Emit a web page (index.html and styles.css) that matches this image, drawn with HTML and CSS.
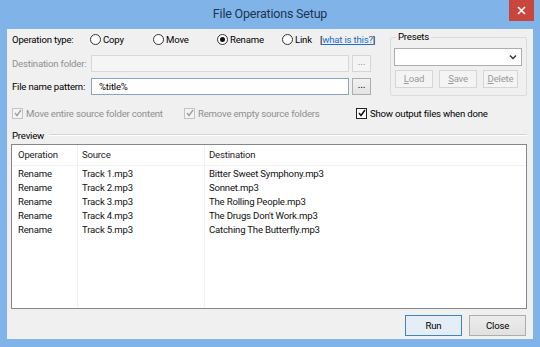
FILE: index.html
```html
<!DOCTYPE html>
<html>
<head>
<meta charset="utf-8">
<link rel="stylesheet" href="styles.css">
</head>
<body>
<div class="window">
  <div class="titlebar">
    <span></span>
    <div class="title">File Operations Setup</div>
    <div class="close"><svg width="9" height="9" viewBox="0 0 9 9"><path d="M1 1L8 8M8 1L1 8" stroke="#fff" stroke-width="1.6"/></svg></div>
  </div>
  <div class="client">
    <div class="top">
      <div class="left">
        <div class="row row1">
          <span class="label">Operation type:</span>
          <label class="radio w63"><span class="rbox"></span>Copy</label>
          <label class="radio w64"><span class="rbox"></span>Move</label>
          <label class="radio w65"><span class="rbox on"></span>Rename</label>
          <label class="radio"><span class="rbox"></span>Link</label>
          <span class="help">[<span class="link">what is this?</span>]</span>
        </div>
        <div class="row row2">
          <span class="label dis">Destination folder:</span>
          <div class="input disabled"></div>
          <div class="dots disabled">...</div>
        </div>
        <div class="row row3">
          <span class="label">File name pattern:</span>
          <div class="input">%title%</div>
          <div class="dots">...</div>
        </div>
      </div>
      <div class="group">
        <div class="legend">Presets</div>
        <div class="combo"><svg width="8" height="6" viewBox="0 0 8 6"><path d="M1 1.5L4 4.5L7 1.5" fill="none" stroke="#333" stroke-width="1.4"/></svg></div>
        <div class="gbtns">
          <div class="btn dis b38"><u>L</u>oad</div>
          <div class="btn dis b38"><u>S</u>ave</div>
          <div class="btn dis b36"><u>D</u>elete</div>
        </div>
      </div>
    </div>
    <div class="checks">
      <label class="check dis"><span class="cbox"><svg width="8" height="8" viewBox="0 0 8 8"><path d="M1 4L3 6.5L7 1" fill="none" stroke="#a0a0a0" stroke-width="1.4"/></svg></span>Move entire source folder content</label>
      <label class="check dis"><span class="cbox"><svg width="8" height="8" viewBox="0 0 8 8"><path d="M1 4L3 6.5L7 1" fill="none" stroke="#a0a0a0" stroke-width="1.4"/></svg></span>Remove empty source folders</label>
      <label class="check"><span class="cbox on"><svg width="8" height="8" viewBox="0 0 8 8"><path d="M1 4L3 6.5L7 1" fill="none" stroke="#111" stroke-width="1.5"/></svg></span>Show output files when done</label>
    </div>
    <div class="phead"><span>Preview</span><div class="rule"></div></div>
    <div class="list">
      <div class="col c1">
        <div class="hcell">Operation</div>
        <div class="cell">Rename</div>
        <div class="cell">Rename</div>
        <div class="cell">Rename</div>
        <div class="cell">Rename</div>
        <div class="cell">Rename</div>
      </div>
      <div class="col c2">
        <div class="hcell">Source</div>
        <div class="cell">Track 1.mp3</div>
        <div class="cell">Track 2.mp3</div>
        <div class="cell">Track 3.mp3</div>
        <div class="cell">Track 4.mp3</div>
        <div class="cell">Track 5.mp3</div>
      </div>
      <div class="col c3">
        <div class="hcell">Destination</div>
        <div class="cell">Bitter Sweet Symphony.mp3</div>
        <div class="cell">Sonnet.mp3</div>
        <div class="cell">The Rolling People.mp3</div>
        <div class="cell">The Drugs Don't Work.mp3</div>
        <div class="cell">Catching The Butterfly.mp3</div>
      </div>
    </div>
    <div class="footer">
      <div class="pbtn default">Run</div>
      <div class="pbtn">Close</div>
    </div>
  </div>
</div>
</body>
</html>
```

FILE: styles.css
```css
html, body { margin: 0; padding: 0; }
body {
  font-family: Roboto, "Liberation Sans", sans-serif;
  font-size: 9.6px;
  letter-spacing: -0.2px;
  color: #000;
  white-space: nowrap;
}
.window {
  width: 540px;
  height: 347px;
  background: #80b4e9;
  display: flex;
  flex-direction: column;
}
.titlebar {
  height: 29px;
  display: grid;
  grid-template-columns: 1fr auto 1fr;
  align-items: start;
}
.title {
  font-size: 12.5px;
  letter-spacing: -0.2px;
  line-height: 27px;
  color: #1c3553;
}
.close {
  justify-self: end;
  margin-right: 6px;
  width: 25px;
  height: 21px;
  background: #c9463d;
  display: flex;
  align-items: center;
  justify-content: center;
}
.client {
  flex: 1;
  margin: 0 7px 8px 7px;
  background: #f0f0f0;
  padding: 2px 6px 0 5px;
  display: flex;
  flex-direction: column;
}
.top {
  display: flex;
  justify-content: space-between;
}
.left { width: 360px; }
.row {
  display: flex;
  align-items: center;
}
.row1 { height: 16px; }
.row2 { height: 17px; margin-top: 8px; }
.row3 { height: 17px; margin-top: 6px; }
.label { width: 78px; flex: none; }
.label.dis { color: #8f8f8f; }
.radio {
  display: flex;
  align-items: center;
  gap: 2px;
  flex: none;
}
.w63 { width: 63px; }
.w64 { width: 64px; }
.w65 { width: 65px; }
.rbox {
  width: 9px;
  height: 9px;
  border: 1px solid #333;
  border-radius: 50%;
  background: #fff;
  display: flex;
  align-items: center;
  justify-content: center;
}
.rbox.on::after {
  content: "";
  width: 5px;
  height: 5px;
  border-radius: 50%;
  background: #111;
}
.help { margin-left: 8px; }
.link { color: #1a6fc9; text-decoration: underline; }
.input {
  margin-left: 1px;
  height: 15px;
  border: 1px solid #a9acb3;
  background: #fff;
  padding-left: 7px;
  line-height: 15px;
  width: 249px;
}
.input.disabled {
  background: #f5f5f5;
  border-color: #d9d9d9;
}
.row3 .input { border-color: #8aa3c0; }
.dots {
  margin-left: 3px;
  width: 17px;
  height: 15px;
  border: 1px solid #adadad;
  background: linear-gradient(#f2f2f2, #e3e3e3);
  text-align: center;
  line-height: 12px;
  font-size: 10px;
}
.dots.disabled {
  border-color: #d5d5d5;
  background: #f4f4f4;
  color: #999;
}
.group {
  width: 128px;
  margin-top: 6px;
  height: 57px;
  border: 1px solid #dcdcdc;
  border-radius: 2px;
  padding: 0 4px 0 3px;
}
.legend {
  margin-top: -7px;
  margin-left: 2px;
  padding: 0 2px;
  height: 12px;
  line-height: 12px;
  background: #f0f0f0;
  width: max-content;
}
.combo {
  margin-top: 5px;
  height: 16px;
  border: 1px solid #abadb3;
  background: #fff;
  display: flex;
  align-items: center;
  justify-content: flex-end;
  padding-right: 4px;
}
.gbtns {
  margin-top: 4px;
  display: flex;
  gap: 6px;
  padding-left: 1px;
}
.btn {
  height: 16px;
  border: 1px solid #d5d5d5;
  background: #f4f4f4;
  color: #9a9a9a;
  text-align: center;
  line-height: 16px;
}
.b38 { width: 36px; }
.b36 { width: 33px; }
.checks {
  margin-top: 9px;
  height: 16px;
  display: flex;
  align-items: center;
}
.check {
  width: 172px;
  display: flex;
  align-items: center;
  gap: 3px;
  flex: none;
}
.check.dis { color: #8f8f8f; }
.cbox {
  width: 9px;
  height: 9px;
  border: 1px solid #c3c3c3;
  background: #f4f4f4;
  display: flex;
  align-items: center;
  justify-content: center;
}
.cbox.on { border-color: #222; background: #fff; }
.phead {
  margin-top: 8px;
  height: 12px;
  display: flex;
  align-items: center;
  gap: 5px;
}
.rule {
  flex: 1;
  height: 0;
  border-top: 1px solid #d5d5d5;
  border-bottom: 1px solid #fff;
  margin-top: -1px;
}
.list {
  margin-top: 3px;
  margin-left: -1px;
  height: 163px;
  border: 1px solid #828790;
  background: #fff;
  display: flex;
}
.col {
  display: flex;
  flex-direction: column;
}
.c1 { width: 65px; border-right: 1px solid #f0f0f0; }
.c2 { width: 126px; border-right: 1px solid #f0f0f0; }
.c3 { flex: 1; }
.hcell {
  height: 20px;
  line-height: 20px;
  padding-left: 4px;
  border-bottom: 1px solid #f2f2f2;
  color: #1e1e1e;
}
.c1 .hcell, .c1 .cell { padding-left: 6px; }
.cell {
  height: 14px;
  line-height: 14px;
  padding-left: 4px;
  color: #111;
}
.hcell + .cell { margin-top: 1px; }
.footer {
  margin-top: 6px;
  display: flex;
  justify-content: flex-end;
  gap: 7px;
  padding-right: 1px;
}
.pbtn {
  width: 55px;
  height: 19px;
  border: 1px solid #adadad;
  background: linear-gradient(#ececec, #e1e1e1);
  text-align: center;
  line-height: 19px;
}
.pbtn.default { border-color: #3f85c6; background: #e5eef7; }
```
